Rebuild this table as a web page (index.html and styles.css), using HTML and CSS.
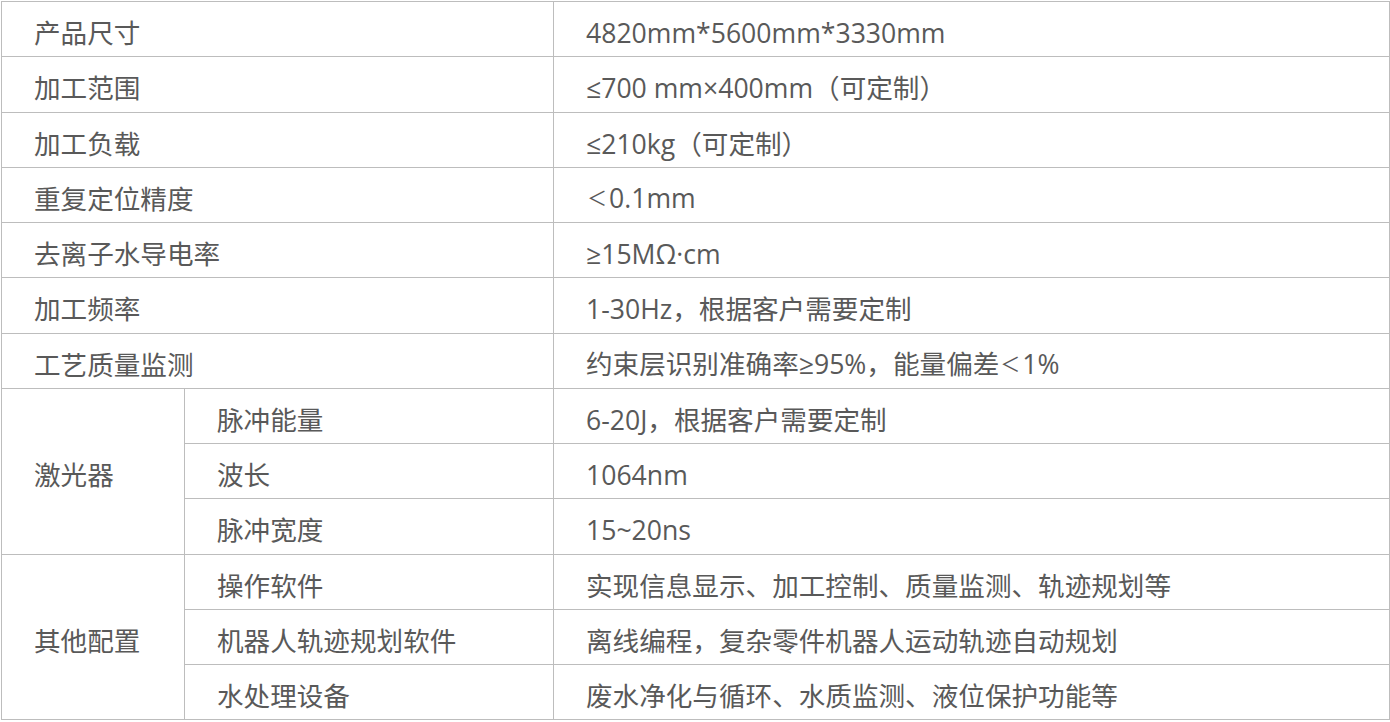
FILE: index.html
```html
<!DOCTYPE html>
<html lang="zh-CN">
<head>
<meta charset="utf-8">
<title>参数表</title>
<link rel="stylesheet" href="styles.css">
</head>
<body>
<table class="spec">
  <colgroup>
    <col class="c1">
    <col class="c2">
    <col class="c3">
  </colgroup>
  <tbody>
    <tr><td colspan="2">产品尺寸</td><td>4820mm*5600mm*3330mm</td></tr>
    <tr><td colspan="2">加工范围</td><td>≤700 mm×400mm（可定制）</td></tr>
    <tr><td colspan="2">加工负载</td><td>≤210kg（可定制）</td></tr>
    <tr><td colspan="2">重复定位精度</td><td><span class="lt">＜</span>0.1mm</td></tr>
    <tr><td colspan="2">去离子水导电率</td><td>≥15MΩ·cm</td></tr>
    <tr><td colspan="2">加工频率</td><td>1-30Hz，根据客户需要定制</td></tr>
    <tr><td colspan="2">工艺质量监测</td><td>约束层识别准确率≥95%，能量偏差<span class="lt">＜</span>1%</td></tr>
    <tr><td rowspan="3">激光器</td><td>脉冲能量</td><td>6-20J，根据客户需要定制</td></tr>
    <tr><td>波长</td><td>1064nm</td></tr>
    <tr><td>脉冲宽度</td><td>15~20ns</td></tr>
    <tr><td rowspan="3">其他配置</td><td>操作软件</td><td>实现信息显示、加工控制、质量监测、轨迹规划等</td></tr>
    <tr><td>机器人轨迹规划软件</td><td>离线编程，复杂零件机器人运动轨迹自动规划</td></tr>
    <tr><td>水处理设备</td><td>废水净化与循环、水质监测、液位保护功能等</td></tr>
  </tbody>
</table>
</body>
</html>
```
FILE: styles.css
```css
html, body {
  margin: 0;
  padding: 0;
  background: #ffffff;
}
body {
  padding: 1px 0 0 1px;
  font-family: "Open Sans", "Noto Sans CJK SC", sans-serif;
  color: #595959;
}
.spec {
  border-collapse: collapse;
  table-layout: fixed;
  width: 1388px;
  font-size: 26.6px;
}
.spec .c1 { width: 183px; }
.spec .c2 { width: 369px; }
.spec .c3 { width: 836px; }
.spec td {
  border: 1px solid #bdbdbd;
  height: 55.25px;
  padding: 8px 0 0 32px;
  box-sizing: border-box;
  vertical-align: middle;
  white-space: nowrap;
  line-height: 30px;
}
.lt {
  font-size: 20px;
  padding: 0 2px 0 1px;
  vertical-align: 2px;
}
```
